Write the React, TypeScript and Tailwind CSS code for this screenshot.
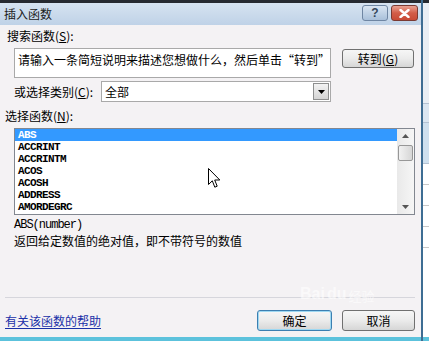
const cjk = { fontFamily: '"Noto Sans CJK SC", "Liberation Sans", sans-serif' }
const mono = { fontFamily: '"Liberation Mono", "Noto Sans CJK SC", monospace' }

const FUNCS = ['ABS', 'ACCRINT', 'ACCRINTM', 'ACOS', 'ACOSH', 'ADDRESS', 'AMORDEGRC']

function Mn({ k }: { k: string }) {
  return (
    <span>
      (<span className="underline underline-offset-1">{k}</span>)
    </span>
  )
}

function WinButton({ children, primary = false, className = '' }: { children: React.ReactNode; primary?: boolean; className?: string }) {
  return (
    <div
      className={
        'flex items-center justify-center rounded-[3px] border text-[12px] leading-[14px] text-black bg-gradient-to-b from-[#f6f6f6] via-[#ebebeb] to-[#d6d6d6] ' +
        (primary ? 'border-[#3c7fb1] shadow-[inset_0_0_0_1px_#9ed8f2] ' : 'border-[#707070] ') +
        className
      }
    >
      {children}
    </div>
  )
}

export default function App() {
  return (
    <div className="relative flex h-[341px] w-[429px] overflow-hidden bg-[#f4f2f4]" style={cjk}>
      <div className="flex w-[421px] flex-col">
        <div className="h-[3px] bg-[#262a31]" />
        {/* title bar */}
        <div className="flex h-[22px] items-start bg-gradient-to-b from-[#d6e3f1] to-[#bfd2e7]">
          <span className="mt-[4px] pl-[4px] text-[12px] leading-[14px] text-[#1b1b1b]">插入函数</span>
          <div className="ml-auto mr-[3px] mt-[2px] flex gap-[3px]">
            <div className="flex h-[16px] w-[26px] items-center justify-center rounded-[3px] border border-[#6f86a3] bg-gradient-to-b from-[#d9e5f2] to-[#a9c0da] text-[12px] font-bold leading-none text-[#35475c]" style={{ fontFamily: '"Liberation Sans", sans-serif' }}>
              ?
            </div>
            <div className="flex h-[16px] w-[27px] items-center justify-center rounded-[3px] border border-[#7a3a33] bg-gradient-to-b from-[#e8a193] via-[#d25c48] to-[#c84a36]">
              <svg width="11" height="9" viewBox="0 0 11 9">
                <path d="M1.5 1 L9.5 8 M9.5 1 L1.5 8" stroke="#ffffff" strokeWidth="2.4" strokeLinecap="round" />
              </svg>
            </div>
          </div>
        </div>

        {/* body */}
        <div className="flex flex-1 flex-col">
          <div className="mt-[4px] pl-[7px] text-[12px] leading-[14px] text-black">
            搜索函数<Mn k="S" />:
          </div>
          <div className="mt-[5px] flex items-start">
            <div className="ml-[14px] h-[30px] w-[317px] border border-[#a9a9a9] bg-white pl-[3px] pt-[4px] text-[12px] leading-[14px] text-black">
              请输入一条简短说明来描述您想做什么，然后单击“转到”
            </div>
            <WinButton className="ml-[11px] mt-[1px] h-[19px] w-[72px]">
              转到<Mn k="G" />
            </WinButton>
          </div>
          <div className="mt-[3px] flex items-center">
            <div className="ml-[14px] w-[87px] text-[12px] leading-[14px] text-black">
              或选择类别<Mn k="C" />:
            </div>
            <div className="flex h-[21px] w-[230px] items-center border border-[#a9a9a9] bg-white">
              <span className="pl-[3px] text-[12px] leading-[14px] text-black">全部</span>
              <div className="ml-auto mr-[1px] flex h-[17px] w-[16px] items-center justify-center border border-[#8e8f8f] bg-gradient-to-b from-[#f3f3f3] to-[#d4d4d4]">
                <svg width="7" height="4" viewBox="0 0 7 4">
                  <path d="M0 0 H7 L3.5 4 Z" fill="#000" />
                </svg>
              </div>
            </div>
          </div>
          <div className="mt-[7px] pl-[5px] text-[12px] leading-[14px] text-black">
            选择函数<Mn k="N" />:
          </div>

          {/* function list */}
          <div className="ml-[14px] mt-[5px] flex h-[87px] w-[401px] border border-[#828790] bg-white">
            <div className="flex-1">
              {FUNCS.map((f, i) => (
                <div
                  key={f}
                  className={
                    'h-[12px] pl-[3px] text-[11px] font-bold leading-[12px] tracking-[-0.6px] ' +
                    (i === 0 ? 'bg-[#3399ff] text-white' : 'text-black')
                  }
                  style={mono}
                >
                  {f}
                </div>
              ))}
            </div>
            <div className="flex w-[17px] flex-col items-center bg-gradient-to-r from-[#e9e9e9] to-[#f6f6f6]">
              <svg className="mt-[5px]" width="7" height="4" viewBox="0 0 7 4">
                <path d="M0 4 H7 L3.5 0 Z" fill="#555" />
              </svg>
              <div className="mt-[7px] h-[16px] w-[15px] rounded-[2px] border border-[#979797] bg-gradient-to-r from-[#f2f2f2] to-[#d6d6d6]" />
              <svg className="mt-auto mb-[5px]" width="7" height="4" viewBox="0 0 7 4">
                <path d="M0 0 H7 L3.5 4 Z" fill="#555" />
              </svg>
            </div>
          </div>

          <div className="mt-[4px] pl-[14px] text-[12px] leading-[13px] tracking-[-1px] text-black" style={mono}>
            ABS(number)
          </div>
          <div className="mt-[2px] pl-[14px] text-[12px] leading-[14px] text-black">
            返回给定数值的绝对值，即不带符号的数值
          </div>

          <div className="ml-[5px] mt-[49px] h-[1px] w-[410px] bg-[#d6d6dc]" />
          <div className="mt-[12px] flex items-center">
            <span className="pl-[5px] text-[12px] leading-[14px] text-[#1a30a8] underline underline-offset-2">有关该函数的帮助</span>
            <WinButton primary className="ml-auto h-[21px] w-[75px]">
              确定
            </WinButton>
            <WinButton className="ml-[10px] mr-[6px] h-[21px] w-[73px]">取消</WinButton>
          </div>
          <div className="flex-1" />
        </div>
        <div className="h-[4px] bg-[#5cc2dc]" />
      </div>

      {/* excel behind */}
      <div className="flex w-[8px] flex-col border-l-2 border-[#3e6d93] bg-white">
        <div className="h-[3px] bg-[#262a31]" />
        <div className="h-[100px] bg-[#e9eef4]" />
        <div className="h-[1px] bg-[#b4c2d2]" />
        <div className="h-[18px] bg-[#dbe6f1]" />
        <div className="h-[1px] bg-[#b4c2d2]" />
        <div className="h-[40px] bg-[#cfe0ee]" />
        <div className="h-[1px] bg-[#b4c2d2]" />
        <div className="h-[20px]" />
        <div className="h-[1px] bg-[#c8c8c8]" />
        <div className="h-[20px]" />
        <div className="h-[1px] bg-[#c8c8c8]" />
        <div className="h-[20px]" />
        <div className="h-[1px] bg-[#c8c8c8]" />
        <div className="h-[20px]" />
        <div className="h-[1px] bg-[#c8c8c8]" />
        <div className="flex-1" />
        <div className="h-[4px] bg-[#5cc2dc]" />
      </div>

      {/* mouse cursor */}
      <svg className="absolute left-[208px] top-[168px]" width="13" height="21" viewBox="0 0 13 21">
        <path d="M0.5 0.5 V16.5 L4.3 12.8 L6.8 19.2 L9.2 18.2 L6.7 12 H11.8 Z" fill="#fff" stroke="#000" strokeWidth="1" strokeLinejoin="miter" />
      </svg>

      {/* watermark */}
      <div className="pointer-events-none absolute left-[300px] top-[286px] flex items-end gap-[2px] text-[#ffffff] opacity-60" style={{ fontFamily: '"Liberation Sans", sans-serif' }}>
        <span className="text-[16px] font-bold leading-none">Bai</span>
        <span className="text-[16px] font-bold leading-none">du</span>
        <span className="text-[13px] leading-none" style={cjk}>经验</span>
      </div>
    </div>
  )
}
